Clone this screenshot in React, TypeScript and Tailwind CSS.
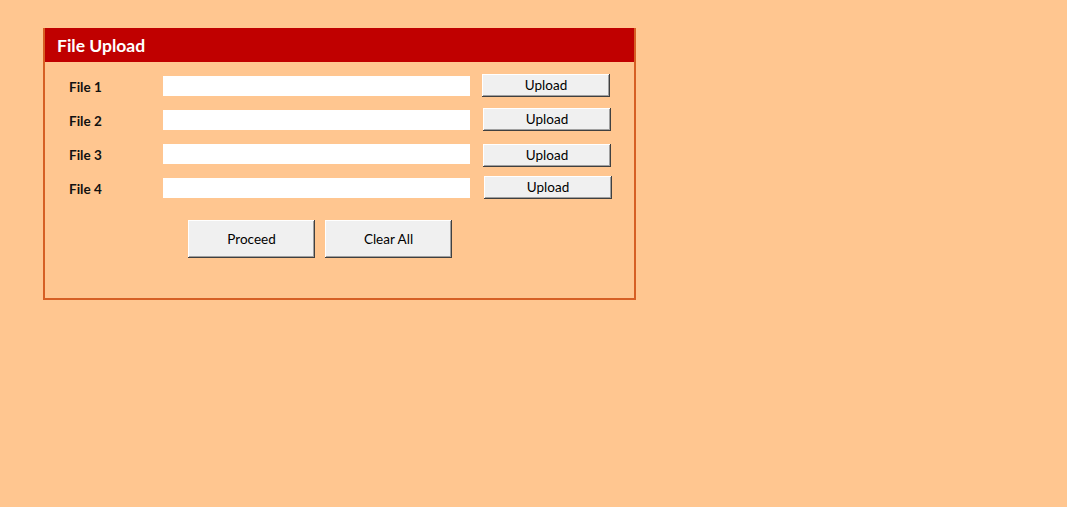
import React from "react";

const btn =
  "bg-[#f0f0f0] text-[13.5px] text-black shadow-[inset_-1px_-1px_#404040,inset_1px_1px_#ffffff,inset_-2px_-2px_#a0a0a0]";

const rows = [
  { label: "File 1", btnCls: "ml-[12px] mt-[-1px]" },
  { label: "File 2", btnCls: "ml-[13px] mt-[-1px]" },
  { label: "File 3", btnCls: "ml-[13px] mt-[3px]" },
  { label: "File 4", btnCls: "ml-[14px] mt-[-1px]" },
];

export default function App() {
  return (
    <div
      className="w-full h-[507px] bg-[#ffc690] pl-[43px] pt-[28px]"
      style={{ fontFamily: "Lato, 'Liberation Sans', sans-serif" }}
    >
      <div className="w-[593px] h-[272px] border-2 border-[#d65f24] flex flex-col">
        <div className="h-[34px] bg-[#c00000] flex items-center pl-[12px] mt-[-2px] pt-[2px]">
          <span className="text-white font-bold text-[17.5px]">File Upload</span>
        </div>
        <div className="pt-[7px] flex flex-col">
          {rows.map((r) => (
            <div key={r.label} className="h-[34px] flex items-center pl-[24px]">
              <span className="w-[94px] font-bold text-[13.5px] text-[#111] pt-[2px]">
                {r.label}
              </span>
              <div className="w-[307px] h-[20px] bg-white" />
              <button className={`${btn} w-[128px] h-[23px] ${r.btnCls}`}>Upload</button>
            </div>
          ))}
          <div className="flex gap-[10px] pl-[143px] mt-[15px]">
            <button className={`${btn} w-[127px] h-[38px]`}>Proceed</button>
            <button className={`${btn} w-[127px] h-[38px]`}>Clear All</button>
          </div>
        </div>
      </div>
    </div>
  );
}
